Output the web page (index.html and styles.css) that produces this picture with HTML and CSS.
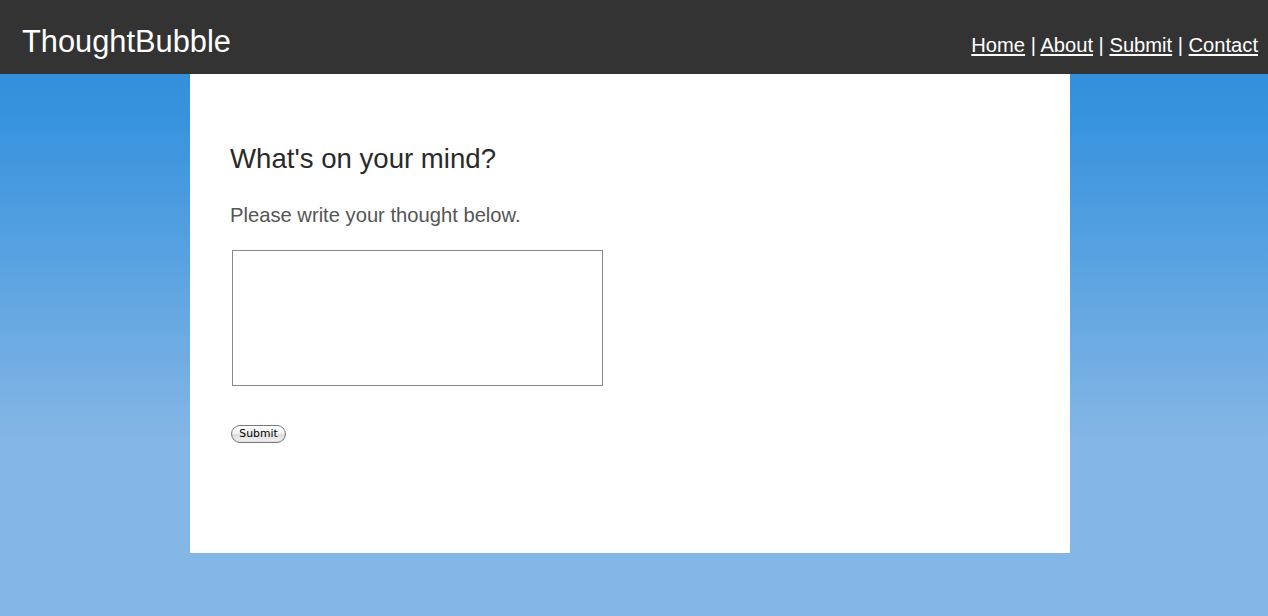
FILE: index.html
```html
<!DOCTYPE html>
<html lang="en">
<head>
<meta charset="utf-8">
<title>ThoughtBubble</title>
<link rel="stylesheet" href="styles.css">
</head>
<body>
<header class="topbar">
  <div class="brand">ThoughtBubble</div>
  <nav class="nav">
    <a href="#">Home</a> | <a href="#">About</a> | <a href="#">Submit</a> | <a href="#">Contact</a>
  </nav>
</header>
<div class="stage">
  <main class="card">
    <h1 class="title">What's on your mind?</h1>
    <p class="lead">Please write your thought below.</p>
    <form class="form">
      <textarea class="thought"></textarea>
      <button type="button" class="submit">Submit</button>
    </form>
  </main>
</div>
</body>
</html>
```

FILE: styles.css
```css
html, body {
  margin: 0;
  padding: 0;
}
body {
  font-family: "Liberation Sans", Arial, Helvetica, sans-serif;
  min-height: 616px;
  background: #84b6e6 linear-gradient(to bottom, #333 0, #333 74px, #3390dc 74px, #3a94dd 130px, #84b6e6 440px) no-repeat;
}
.topbar {
  box-sizing: border-box;
  height: 74px;
  background: #333333;
  display: flex;
  justify-content: space-between;
  align-items: baseline;
  padding: 25px 10px 0 22px;
  color: #fff;
}
.brand {
  font-size: 30.8px;
  line-height: 34px;
}
.nav {
  font-size: 20.15px;
  line-height: 24px;
  color: #fff;
}
.nav a {
  color: #fff;
  text-decoration: underline;
}
.stage {
  padding-right: 8px;
}
.card {
  box-sizing: border-box;
  width: 880px;
  height: 479px;
  margin: 0 auto;
  background: #fff;
  padding: 69px 40px 0 40px;
}
.title {
  margin: 0;
  font-size: 27.6px;
  line-height: 32px;
  font-weight: normal;
  color: #2a2a2a;
}
.lead {
  margin: 28px 0 0 0;
  font-size: 20.2px;
  line-height: 24px;
  color: #555;
}
.form {
  margin-top: 23px;
}
.thought {
  display: block;
  box-sizing: border-box;
  width: 371px;
  height: 136px;
  margin: 0 0 0 2px;
  border: 1px solid #888;
  padding: 2px;
  resize: none;
  background: #fff;
}
.submit {
  display: block;
  box-sizing: border-box;
  margin: 39px 0 0 1px;
  width: 55px;
  height: 18px;
  padding: 0;
  border: 1px solid #7a7a7a;
  border-radius: 9px;
  background: linear-gradient(to bottom, #ffffff 0, #f2f2f2 45%, #dcdcdc 55%, #f4f4f4 100%);
  font-family: "DejaVu Sans", "Liberation Sans", sans-serif;
  font-size: 10.8px;
  line-height: 16px;
  color: #000;
  box-shadow: inset 0 -1px 1px rgba(0,0,0,0.08);
}
```
